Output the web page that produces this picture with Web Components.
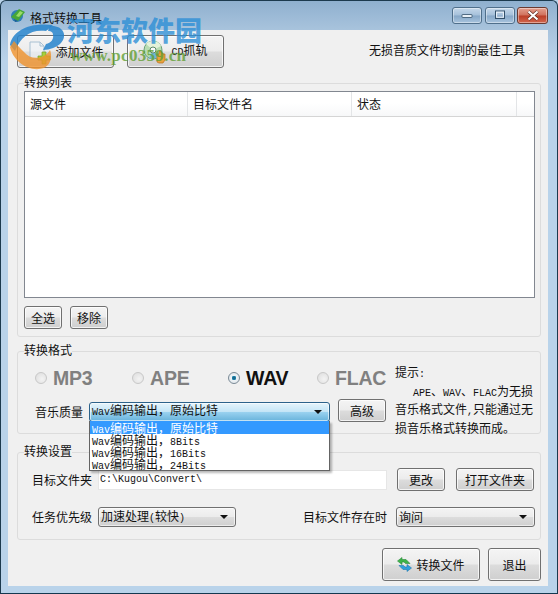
<!DOCTYPE html>
<html>
<head>
<meta charset="utf-8">
<style>
html, body { margin: 0; padding: 0; background: #b9d3ea; }
body {
  font: 12px/16px "Noto Sans CJK SC", sans-serif;
  color: #111;
}
</style>
</head>
<body>

<app-window>
  <group-box slot="list" label="转换列表" style="height:254px;margin-top:15px">
    <file-list></file-list>
    <div style="display:flex;gap:8px;margin-top:8px">
      <push-button style="width:38px;height:23px">全选</push-button>
      <push-button style="width:38px;height:23px">移除</push-button>
    </div>
  </group-box>

  <group-box label="转换格式" style="height:83px;margin-top:14px">
    <format-panel></format-panel>
  </group-box>

  <group-box label="转换设置" style="height:88px;margin-top:18px">
    <settings-panel></settings-panel>
  </group-box>
</app-window>

<script>
// no whitespace around the slot: this sits inline inside running text
class MonoText extends HTMLElement {
  constructor () {
    super();
    this.attachShadow({ mode: 'open' });
    this.shadowRoot.innerHTML = '<style>:host { display: inline; font-family: "Liberation Mono", monospace; font-size: 10px; }</style><slot></slot>';
  }
}

class AppWindow extends HTMLElement {
  constructor () {
    super();
    this.attachShadow({ mode: 'open' });
    this.shadowRoot.innerHTML = `
      <style>
      :host {
        display: flex;
        flex-direction: column;
        position: relative;
        box-sizing: border-box;
        width: 558px;
        height: 594px;
        overflow: hidden;
        border: 1px solid #1c3a4e;
        border-bottom-color: #14384f;
        border-radius: 6px 6px 0 0;
        background: linear-gradient(180deg, #8fb0cf 0, #a9c4dd 30px, #b9d3ea 60px, #b9d3ea 100%);
      }
      .title {
        flex: none;
        height: 29px;
        display: flex;
        align-items: center;
        padding: 0 0 0 9px;
      }
      .title span { margin-left: 4px; margin-top: 4px; color: #111; }
      .caps { margin-left: auto; display: flex; gap: 3px; margin-top: -1px; margin-right: 9px; }
      .cap {
        box-sizing: border-box;
        width: 30px;
        height: 17px;
        display: flex;
        align-items: center;
        justify-content: center;
        border: 1px solid #4f6f8b;
        border-radius: 3px;
        background: linear-gradient(180deg, #c5d8ea 0, #a5c0da 48%, #86a7c7 52%, #a8c4de 100%);
        box-shadow: inset 0 0 0 1px rgba(255,255,255,.4);
      }
      .cap.close {
        width: 31px;
        margin-left: -1px;
        border-color: #6b3a30;
        background: linear-gradient(180deg, #e4a08e 0, #d0715c 48%, #bb3d26 52%, #d2674e 100%);
      }
      .client {
        flex: 1;
        margin: 0 9px 7px 7px;
        box-sizing: border-box;
        background: #f0f0f0;
        padding: 5px 7px 5px 9px;
        display: flex;
        flex-direction: column;
      }
      .tools {
        display: flex;
        align-items: center;
        gap: 13px;
        height: 33px;
        flex: none;
      }
      .slogan {
        margin-left: auto;
        margin-right: 16px;
        margin-top: -3px;
      }
      .foot {
        display: flex;
        justify-content: flex-end;
        gap: 8px;
        margin-top: 8px;
      }
      .watermark {
        position: absolute;
        left: 0;
        top: 0;
        width: 210px;
        height: 72px;
        pointer-events: none;
      }
      .wm-cn {
        position: absolute;
        left: 66px;
        top: 12px;
        font: 900 27px/34px "Noto Sans CJK SC", sans-serif;
        color: rgba(43, 142, 214, .8);
        white-space: nowrap;
      }
      .wm-en {
        position: absolute;
        left: 69px;
        top: 45px;
        font: bold 17px/20px "Liberation Serif", serif;
        letter-spacing: .3px;
        color: rgba(96, 158, 50, .8);
        white-space: nowrap;
      }
      </style>
      <div class="title">
        <svg width="16" height="15" viewBox="0 0 16 15">
          <circle cx="7" cy="8" r="6" fill="#2f7fb8"/>
          <path d="M1 9 L9 1 L15 4 L8 13 Z" fill="#46a63a"/>
          <path d="M6 8 L10 3 L13 4.5 L9 9 Z" fill="#9bdc68"/>
          <path d="M4 11 L8 13 L5 14 Z" fill="#1d5f93"/>
        </svg>
        <span>格式转换工具</span>
        <div class="caps">
          <div class="cap">
            <svg width="14" height="8" viewBox="0 0 14 8"><rect x="2" y="3.5" width="10" height="3" rx=".5" fill="#e8f0f7" stroke="#33506a" stroke-width=".8"/></svg>
          </div>
          <div class="cap">
            <svg width="14" height="10" viewBox="0 0 14 10"><rect x="2.5" y="1" width="9" height="7.5" fill="none" stroke="#33506a" stroke-width="1"/><rect x="3.6" y="2.2" width="6.8" height="5" fill="none" stroke="#eef4fa" stroke-width="1"/></svg>
          </div>
          <div class="cap close">
            <svg width="14" height="11" viewBox="0 0 14 11"><path d="M2.5 1.5 L11.5 9.5 M11.5 1.5 L2.5 9.5" stroke="#5a2a20" stroke-width="3.4"/><path d="M2.5 1.5 L11.5 9.5 M11.5 1.5 L2.5 9.5" stroke="#fff" stroke-width="2.2"/></svg>
          </div>
        </div>
      </div>
      <div class="client">
        <div class="tools">
          <push-button style="width:97px;height:33px" data-gap="4">
            <svg slot="icon" width="24" height="26" viewBox="0 0 24 26">
              <path d="M3 3 H13 L17 7 V20 H3 Z" fill="rgba(240,246,251,.55)" stroke="#a8c0d2"/>
              <path d="M13 3 V7 H17" fill="none" stroke="#a8c0d2"/>
              <path d="M11 17 H15 V13 H19 V17 H23 V21 H19 V25 H15 V21 H11 Z" fill="#a5d03c" stroke="#77a02a" stroke-width=".7"/>
            </svg>
            添加文件
          </push-button>
          <push-button style="width:97px;height:33px" data-gap="4">
            <svg slot="icon" width="24" height="24" viewBox="0 0 24 24">
              <circle cx="10" cy="10" r="9" fill="#b8dcb2" stroke="#5f9a6e" stroke-width=".9"/>
              <path d="M10 10 L3 4 A9 9 0 0 1 18 6 Z" fill="#e4f2da"/>
              <path d="M10 10 L6 18 A9 9 0 0 0 16 16 Z" fill="#6fb6d8"/>
              <circle cx="10" cy="10" r="3" fill="#fafafa" stroke="#5d8a68"/>
              <path d="M14 22 V14 H16 V11 H18 V13 H20 V14 H22 V20 L20 23 H16 Z" fill="#e9a23c" stroke="#b9701f" stroke-width=".7"/>
            </svg>
            <span><mono-text>CD</mono-text>抓轨</span>
          </push-button>
          <div class="slogan">无损音质文件切割的最佳工具</div>
        </div>
        <slot name="list"></slot>
        <slot></slot>
        <div class="foot">
          <push-button style="width:98px;height:33px" data-gap="4">
            <svg slot="icon" width="15" height="15" viewBox="0 0 15 15">
              <path d="M0.5 4 L5 0.5 V2.5 H9 L13 6.5 H8.5 L7 5 H5 V7.5 Z" fill="#3cb34a" stroke="#2b8a3a" stroke-width=".6"/>
              <path d="M14.5 11 L10 14.5 V12.5 H6 L2 8.5 H6.5 L8 10 H10 V7.5 Z" fill="#2f9fdc" stroke="#1f77ad" stroke-width=".6"/>
            </svg>
            转换文件
          </push-button>
          <push-button style="width:53px;height:33px">退出</push-button>
        </div>
      </div>
      <div class="watermark">
        <svg width="75" height="75" viewBox="0 0 75 75" style="position:absolute;left:0;top:0">
          <path d="M9 44 C11 30 28 21 52 24 L45 30 C30 28 20 35 14 50 Z" fill="rgba(38,132,205,.85)"/>
          <path d="M49 25 C62 24 67 34 60 42 C56 46 49 49 42 49 L45 43 C50 42 53 38 52 34 C52 31 50 30 47 30 Z" fill="rgba(38,132,205,.85)"/>
          <path d="M9 46 C12 60 28 72 43 67 C51 63 51 54 49 49 C44 58 30 60 23 51 C19 47 16 44 13 40 Z" fill="rgba(240,146,44,.8)"/>
        </svg>
        <div class="wm-cn">河东软件园</div>
        <div class="wm-en">www.pc0359.cn</div>
      </div>
    `;
  }
}

class PushButton extends HTMLElement {
  constructor () {
    super();
    this.attachShadow({ mode: 'open' });
    this.shadowRoot.innerHTML = `
      <style>
      :host {
        display: inline-flex;
        flex: none;
        box-sizing: border-box;
        align-items: center;
        justify-content: center;
        border: 1px solid #707070;
        border-radius: 3px;
        background: linear-gradient(180deg, #f4f4f4 0, #ececec 48%, #dcdcdc 52%, #cfcfcf 100%);
        box-shadow: inset 0 0 0 1px rgba(255,255,255,.75);
        color: #111;
        white-space: nowrap;
      }
      .i { display: flex; }
      </style>
      <span class="i" style="margin-right:${this.dataset.gap || 0}px"><slot name="icon"></slot></span><slot></slot>
    `;
  }
}

class GroupBox extends HTMLElement {
  constructor () {
    super();
    this.attachShadow({ mode: 'open' });
    this.shadowRoot.innerHTML = `
      <style>
      :host {
        display: block;
        position: relative;
        flex: none;
        box-sizing: border-box;
        border: 1px solid #dcdcdc;
        border-radius: 3px;
        padding: 7px 5px 0 6px;
      }
      .cap {
        position: absolute;
        left: 6px;
        top: -10px;
        background: #f0f0f0;
      }
      </style>
      <div class="cap">${this.getAttribute('label')}</div>
      <slot></slot>
    `;
  }
}

class FileList extends HTMLElement {
  constructor () {
    super();
    this.attachShadow({ mode: 'open' });
    this.shadowRoot.innerHTML = `
      <style>
      :host {
        display: block;
        box-sizing: border-box;
        height: 207px;
        border: 1px solid #828790;
        background: #fff;
      }
      .head {
        display: grid;
        grid-template-columns: 163px 164px 165px 1fr;
        height: 24px;
        border-bottom: 1px solid #d5d5d5;
        background: linear-gradient(180deg, #fff 0, #fff 45%, #f7f8f9 100%);
      }
      .head div {
        display: flex;
        align-items: center;
        padding-left: 5px;
        border-right: 1px solid #e3e5e7;
      }
      .head div:last-child { border-right: 0; }
      </style>
      <div class="head"><div>源文件</div><div>目标文件名</div><div>状态</div><div></div></div>
    `;
  }
}

class RadioOption extends HTMLElement {
  constructor () {
    super();
    this.attachShadow({ mode: 'open' });
    const on = this.hasAttribute('checked');
    this.shadowRoot.innerHTML = `
      <style>
      :host {
        display: inline-flex;
        align-items: center;
        gap: 6px;
        font: bold 19.5px/22px "Liberation Sans", sans-serif;
        letter-spacing: -.2px;
        color: ${on ? '#111' : '#808080'};
      }
      .dot {
        box-sizing: border-box;
        width: 12px;
        height: 12px;
        border-radius: 50%;
        border: 1px solid ${on ? '#7b8a96' : '#c8c8c8'};
        background: ${on ? 'radial-gradient(circle at 50% 50%, #17587a 0, #1f86ad 28%, #eef3f6 34%, #d9e0e5 100%)' : 'radial-gradient(circle at 60% 60%, #f3f3f3, #dcdcdc)'};
      }
      </style>
      <span class="dot"></span><slot></slot>
    `;
  }
}

class ComboBox extends HTMLElement {
  constructor () {
    super();
    this.attachShadow({ mode: 'open' });
    const active = this.hasAttribute('active');
    this.shadowRoot.innerHTML = `
      <style>
      :host {
        display: flex;
        flex: none;
        box-sizing: border-box;
        align-items: center;
        justify-content: space-between;
        padding: 0 7px 0 2px;
        height: 20px;
        border: 1px solid ${active ? '#2c628b' : '#707070'};
        border-radius: 3px;
        background: ${active ? 'linear-gradient(180deg, #e5f4fc 0, #c4e5f6 48%, #98d1ef 52%, #68b3db 100%)' : 'linear-gradient(180deg, #f4f4f4 0, #ececec 48%, #dcdcdc 52%, #cfcfcf 100%)'};
        box-shadow: inset 0 0 0 1px rgba(255,255,255,.6);
        white-space: nowrap;
      }
      .arrow {
        width: 0; height: 0;
        border: 4px solid transparent;
        border-top: 4px solid #111;
        border-bottom: 0;
      }
      </style>
      <span><slot></slot></span><span class="arrow"></span>
    `;
  }
}

class DropList extends HTMLElement {
  constructor () {
    super();
    this.attachShadow({ mode: 'open' });
    this.shadowRoot.innerHTML = `
      <style>
      :host {
        display: block;
        position: absolute;
        z-index: 3;
        box-sizing: border-box;
        background: #fff;
        border: 1px solid #646464;
        border-top: 0;
        box-shadow: 2px 2px 2px rgba(0,0,0,.28);
        white-space: nowrap;
      }
      div { height: 12px; line-height: 12px; padding-left: 2px; }
      div:first-of-type { height: 13px; line-height: 13px; background: #3399ff; color: #fff; }
      </style>
      <div><mono-text>Wav</mono-text>编码输出，原始比特</div>
      <div><mono-text>Wav</mono-text>编码输出，<mono-text>8Bits</mono-text></div>
      <div><mono-text>Wav</mono-text>编码输出，<mono-text>16Bits</mono-text></div>
      <div><mono-text>Wav</mono-text>编码输出，<mono-text>24Bits</mono-text></div>
    `;
  }
}

class FormatPanel extends HTMLElement {
  constructor () {
    super();
    this.attachShadow({ mode: 'open' });
    this.shadowRoot.innerHTML = `
      <style>
      :host {
        display: grid;
        grid-template-columns: 364px 1fr;
        column-gap: 7px;
        position: relative;
        height: 74px;
      }
      .radios {
        display: grid;
        grid-template-columns: 97px 96px 89px auto;
        padding: 8px 0 0 11px;
        height: 22px;
      }
      .row {
        display: flex;
        align-items: center;
        margin-top: 12px;
      }
      .row label {
        width: 54px;
        margin-left: 11px;
      }
      .hint {
        line-height: 15.7px;
        padding-top: 5px;
        white-space: nowrap;
      }
      .hint .in { padding-left: 18px; }
      drop-list { left: 65px; top: 62px; width: 241px; height: 50px; }
      </style>
      <div>
        <div class="radios">
          <radio-option>MP3</radio-option>
          <radio-option>APE</radio-option>
          <radio-option checked>WAV</radio-option>
          <radio-option>FLAC</radio-option>
        </div>
        <div class="row">
          <label>音乐质量</label>
          <combo-box active style="width:241px"><span><mono-text>Wav</mono-text>编码输出，原始比特</span></combo-box>
          <push-button style="width:48px;height:23px;margin-left:8px;margin-top:-2px">高级</push-button>
        </div>
      </div>
      <div class="hint"><div>提示<mono-text>:</mono-text></div><div class="in"><mono-text>APE</mono-text>、<mono-text>WAV</mono-text>、<mono-text>FLAC</mono-text>为无损</div><div>音乐格式文件<mono-text>,</mono-text>只能通过无</div><div>损音乐格式转换而成。</div></div>
      <drop-list></drop-list>
    `;
  }
}

class SettingsPanel extends HTMLElement {
  constructor () {
    super();
    this.attachShadow({ mode: 'open' });
    this.shadowRoot.innerHTML = `
      <style>
      :host {
        display: flex;
        flex-direction: column;
        gap: 16px;
        padding: 8px 0 0 8px;
      }
      .row { display: flex; align-items: center; }
      .row.two { align-items: flex-start; }
      label { flex: none; width: 66px; line-height: 20px; }
      .input {
        box-sizing: border-box;
        width: 289px;
        height: 20px;
        background: #fff;
        border: 1px solid #e6e6e6;
        padding-left: 1px;
        font: 10px/18px "Liberation Mono", monospace;
      }
      </style>
      <div class="row">
        <label>目标文件夹</label>
        <div class="input">C:\\Kugou\\Convert\\</div>
        <push-button style="width:48px;height:23px;margin-left:10px">更改</push-button>
        <push-button style="width:78px;height:23px;margin-left:11px">打开文件夹</push-button>
      </div>
      <div class="row two">
        <label>任务优先级</label>
        <combo-box style="width:138px"><span>加速处理<mono-text>(</mono-text>较快<mono-text>)</mono-text></span></combo-box>
        <label style="width:84px;margin-left:67px;margin-right:9px">目标文件存在时</label>
        <combo-box style="width:139px">询问</combo-box>
      </div>
    `;
  }
}

customElements.define('mono-text', MonoText);
customElements.define('push-button', PushButton);
customElements.define('group-box', GroupBox);
customElements.define('file-list', FileList);
customElements.define('radio-option', RadioOption);
customElements.define('combo-box', ComboBox);
customElements.define('drop-list', DropList);
customElements.define('format-panel', FormatPanel);
customElements.define('settings-panel', SettingsPanel);
customElements.define('app-window', AppWindow);
</script>
</body>
</html>
